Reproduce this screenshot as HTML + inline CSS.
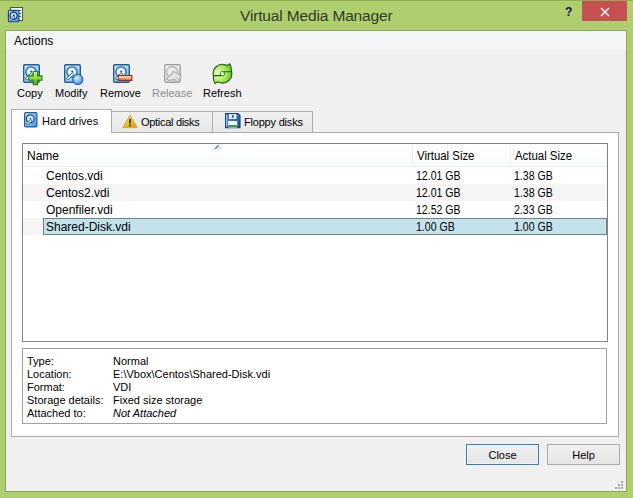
<!DOCTYPE html>
<html><head><meta charset="utf-8">
<style>
*{box-sizing:border-box;margin:0;padding:0}
html,body{width:633px;height:498px;overflow:hidden}
body{position:relative;background:#afcf6f;font-family:"Liberation Sans",sans-serif;font-size:11px;color:#000}
.a{position:absolute;white-space:nowrap}
#topline{left:0;top:0;width:633px;height:1px;background:#8fae57}
#client{left:5px;top:30px;width:622px;height:462px;border:1px solid #8aa85a;background:#f0f0f0}
#menubar{left:6px;top:31px;width:620px;height:20px;background:#f4f5f7}
#menuline{left:6px;top:51px;width:620px;height:1px;background:#e8e8e8}
.tb{top:87px;font-size:11px;line-height:13px;color:#000}
.tab{top:111px;height:22px;border:1px solid #adadad;border-bottom:none;background:linear-gradient(#f0f0f0,#e8e8e8)}
#panel{left:11px;top:132px;width:608px;height:305px;border:1px solid #adadad;background:#fff}
#list{left:22px;top:143px;width:586px;height:199px;border:1px solid #838383;background:#fff}
#details{left:22px;top:348px;width:585px;height:76px;border:1px solid #a0a0a0;background:#fff}
.num{font-size:12px;line-height:14px;transform:scaleX(0.88);transform-origin:0 0}
.btn{top:444px;width:73px;height:21px;border:1px solid #acacac;background:linear-gradient(#f0f0f0,#e5e5e5);text-align:center;line-height:21px;font-size:11px}
</style></head><body>
<div class="a" id="topline"></div>
<!-- title icon -->
<svg class="a" style="left:6px;top:5px" width="20" height="20" viewBox="0 0 20 20">
  <defs><linearGradient id="tig" x1="0" y1="0" x2="1" y2="1"><stop offset="0" stop-color="#c8ecff"/><stop offset="0.55" stop-color="#7cbcf0"/><stop offset="1" stop-color="#3d8ee0"/></linearGradient></defs>
  <rect x="4.5" y="2.5" width="12" height="13" fill="#fff" stroke="#4d5c36"/>
  <path d="M13 5.5h2M13 8.5h2M13 11.5h2" stroke="#3a4658" stroke-width="0.9"/>
  <rect x="2.4" y="5.4" width="10.6" height="11.4" rx="1" fill="url(#tig)" stroke="#1b4c86" stroke-width="1.1"/>
  <circle cx="7.6" cy="10.6" r="3.6" fill="#cfeaff" stroke="#173f86" stroke-width="1.4"/>
  <circle cx="7.8" cy="10.2" r="0.9" fill="#173f86"/>
  <path d="M7.6 11 L4.2 14.2 Q3.6 14.9 4.3 15.3 Q4.9 15.6 5.5 15 L8.9 11.8 Z" fill="#fff" stroke="#173f86" stroke-width="0.8"/>
</svg>
<div class="a" style="left:240px;top:5px;font-size:15.5px;line-height:21px;letter-spacing:-0.15px;color:#2f3a24">Virtual Media Manager</div>
<div class="a" style="left:565px;top:4px;font-size:12px;font-weight:bold;line-height:16px;color:#111">?</div>
<div class="a" style="left:582px;top:1px;width:45px;height:20px;background:#c75050"></div>
<svg class="a" style="left:600px;top:7px" width="10" height="10" viewBox="0 0 10 10"><path d="M1 1L9 9M9 1L1 9" stroke="#fff" stroke-width="1.4"/></svg>

<div class="a" id="client"></div>
<div class="a" id="menubar"></div>
<div class="a" id="menuline"></div>
<div class="a" style="left:14px;top:34px;font-size:12px;line-height:14px">Actions</div>

<!-- toolbar -->
<svg width="0" height="0" style="position:absolute">
 <defs>
  <linearGradient id="hg" x1="0" y1="0" x2="1" y2="1"><stop offset="0" stop-color="#d8f2ff"/><stop offset="0.5" stop-color="#a9dcfb"/><stop offset="1" stop-color="#6fb9ef"/></linearGradient>
  <radialGradient id="dg" cx="0.45" cy="0.4" r="0.6"><stop offset="0" stop-color="#ffffff"/><stop offset="0.6" stop-color="#d9effc"/><stop offset="1" stop-color="#9ccff3"/></radialGradient>
  <linearGradient id="gg" x1="0" y1="0" x2="0" y2="1"><stop offset="0" stop-color="#d6f59a"/><stop offset="0.5" stop-color="#8fdc3c"/><stop offset="1" stop-color="#3fa51a"/></linearGradient>
  <radialGradient id="bg2" cx="0.4" cy="0.35" r="0.7"><stop offset="0" stop-color="#e6f6ff"/><stop offset="0.5" stop-color="#7cc2f5"/><stop offset="1" stop-color="#2f86e0"/></radialGradient>
  <linearGradient id="rg" x1="0" y1="0" x2="0" y2="1"><stop offset="0" stop-color="#fff2e0"/><stop offset="0.45" stop-color="#f7b98a"/><stop offset="1" stop-color="#d9541e"/></linearGradient>
  <linearGradient id="grg" x1="0" y1="0" x2="1" y2="1"><stop offset="0" stop-color="#f4f4f4"/><stop offset="1" stop-color="#cfcfcf"/></linearGradient>
  <radialGradient id="rfg" cx="0.3" cy="0.5" r="0.8"><stop offset="0" stop-color="#f4ffc8"/><stop offset="0.5" stop-color="#a6e85e"/><stop offset="1" stop-color="#4cb520"/></radialGradient>
  <radialGradient id="rfg2" cx="0.5" cy="0.4" r="0.8"><stop offset="0" stop-color="#e8ffc0"/><stop offset="0.5" stop-color="#92df4a"/><stop offset="1" stop-color="#3fa818"/></radialGradient>
  <symbol id="hdd" viewBox="0 0 17 19">
   <rect x="0.7" y="0.7" width="15.6" height="17.6" rx="1.2" fill="url(#hg)" stroke="#1f5aa6" stroke-width="1.4"/>
   <circle cx="8" cy="8" r="5.2" fill="url(#dg)" stroke="#2360a8" stroke-width="1.3"/>
   <circle cx="8.2" cy="7.6" r="1" fill="#1a4c90"/>
   <path d="M8.4 8.8 L2.8 13.8 Q2 14.8 2.9 15.6 Q3.8 16.2 4.6 15.4 L10 10.4 Z" fill="#f4fbff" stroke="#2360a8" stroke-width="1"/>
  </symbol>
  <symbol id="hddg" viewBox="0 0 17 19">
   <rect x="0.7" y="0.7" width="15.6" height="17.6" rx="1.5" fill="url(#grg)" stroke="#9a9a9a" stroke-width="1.2"/>
   <circle cx="8" cy="8" r="5.4" fill="#ececec" stroke="#a8a8a8" stroke-width="1.1"/>
   <path d="M8.6 9 L3 14.5 L2.4 15.4 L3.6 15.8 L9.8 10.2 Z" fill="#f6f6f6" stroke="#a0a0a0" stroke-width="0.9"/>
  </symbol>
 </defs>
</svg>
<svg class="a" style="left:23px;top:64px" width="20" height="22" viewBox="0 0 20 22">
 <use href="#hdd" x="0" y="0" width="17" height="19"/>
 <path d="M10.2 7.5h4.4v4.4h4.4v4.4h-4.4v4.4h-4.4v-4.4h-4.4v-4.4h4.4z" fill="url(#gg)" stroke="#2c7a12" stroke-width="1.1"/>
</svg>
<svg class="a" style="left:64px;top:64px" width="20" height="22" viewBox="0 0 20 22">
 <use href="#hdd" x="0" y="0" width="17" height="19"/>
 <circle cx="13.8" cy="15.5" r="5" fill="url(#bg2)" stroke="#1f5fb0" stroke-width="1.1"/>
</svg>
<svg class="a" style="left:113px;top:64px" width="20" height="22" viewBox="0 0 20 22">
 <use href="#hdd" x="0" y="0" width="17" height="19"/>
 <rect x="5.3" y="11.5" width="13.6" height="5" fill="url(#rg)" stroke="#9a2f12" stroke-width="1.1"/>
</svg>
<svg class="a" style="left:164px;top:64px" width="22" height="22" viewBox="0 0 22 22">
 <use href="#hddg" x="0" y="0" width="17" height="19"/>
 <path d="M2.8 14.2 L8.6 9.6 L9.2 7 L17.8 12.4 L11.2 19.2 L10.9 15.4 L4.6 16.6 Z" fill="url(#grg)" stroke="#a6a6a6" stroke-width="1" stroke-linejoin="round"/>
</svg>
<svg class="a" style="left:210px;top:61px" width="24" height="25" viewBox="0 0 24 25">
 <path d="M3.3 14.6 A9.3 9.3 0 0 1 15.2 3.8 L16.8 4.6 L19.8 2.8 Q21.8 6.5 21.6 10.8 A9.3 9.3 0 0 1 9.6 21.6 L8 20.8 L5 22.6 Q3 18.9 3.3 14.6 Z" fill="url(#rfg)" stroke="#1f5a0e" stroke-width="1.1" stroke-linejoin="round"/>
 <path d="M11.2 14.6 A2.6 2.6 0 0 1 10.2 11.8 Q11 9.8 13.6 10.8 M13.6 10.8 A2.6 2.6 0 0 1 14.6 13.6 Q13.8 15.6 11.2 14.6" fill="#e4f7c8" stroke="#2a6a14" stroke-width="0.9"/>
 <path d="M3.6 14.6 H11.2 M13.6 10.8 H21.4" stroke="#1f5a0e" stroke-width="1.1"/>
</svg>
<div class="a tb" style="left:17px">Copy</div>
<div class="a tb" style="left:55px">Modify</div>
<div class="a tb" style="left:100px">Remove</div>
<div class="a tb" style="left:152px;color:#8d8d8d">Release</div>
<div class="a tb" style="left:203px">Refresh</div>

<!-- tabs -->
<div class="a tab" style="left:111px;width:102px"></div>
<div class="a tab" style="left:212px;width:101px"></div>
<div class="a" id="panel"></div>
<div class="a" style="left:11px;top:109px;width:101px;height:24px;border:1px solid #adadad;border-bottom:none;background:#fff"></div>
<div class="a" style="left:42px;top:114px;font-size:11px;line-height:14px">Hard drives</div>
<div class="a" style="left:141px;top:115px;font-size:11px;line-height:14px;letter-spacing:-0.3px">Optical disks</div>
<div class="a" style="left:244px;top:115px;font-size:11px;line-height:14px;letter-spacing:-0.2px">Floppy disks</div>

<div class="a" id="list"></div>
<svg class="a" style="left:24px;top:112px" width="14" height="16" viewBox="0 0 14 16">
 <defs><linearGradient id="thg" x1="0" y1="0" x2="1" y2="1"><stop offset="0" stop-color="#c6f0ff"/><stop offset="0.5" stop-color="#7cc4f4"/><stop offset="1" stop-color="#3a8ee6"/></linearGradient></defs>
 <rect x="0.6" y="0.6" width="12.3" height="14.3" rx="1.2" fill="url(#thg)" stroke="#1d5aa6" stroke-width="1.2"/>
 <circle cx="6.2" cy="6.8" r="3.9" fill="#d6eefc" stroke="#1a4c96" stroke-width="1.3"/>
 <circle cx="6.3" cy="6.5" r="0.8" fill="#1f56a0"/>
 <path d="M6.6 7.4 L2.6 11 Q2 11.8 2.7 12.4 Q3.4 12.9 4.1 12.3 L8.1 8.7 Z" fill="#fff" stroke="#1f56a0" stroke-width="0.9"/>
</svg>
<svg class="a" style="left:122px;top:114px" width="16" height="15" viewBox="0 0 16 15">
 <defs><linearGradient id="wg" x1="0" y1="0" x2="0.6" y2="1"><stop offset="0" stop-color="#fff7a0"/><stop offset="0.5" stop-color="#f4d11c"/><stop offset="1" stop-color="#e0a800"/></linearGradient></defs>
 <path d="M8 1 L15.2 13.6 L0.8 13.6 Z" fill="url(#wg)" stroke="#b89a3a" stroke-width="0.7" stroke-linejoin="round"/>
 <path d="M8 4.8 L8 9.6" stroke="#1a1a10" stroke-width="1.6"/>
 <rect x="7.1" y="10.6" width="1.8" height="1.6" fill="#1a1a10"/>
</svg>
<svg class="a" style="left:225px;top:113px" width="16" height="16" viewBox="0 0 16 16">
 <defs><linearGradient id="fg" x1="0" y1="0" x2="1" y2="1"><stop offset="0" stop-color="#4a8ee0"/><stop offset="1" stop-color="#1c4f9c"/></linearGradient></defs>
 <path d="M0.6 0.6 H13 L15 2.6 V14.6 H0.6 Z" fill="url(#fg)" stroke="#163f80" stroke-width="1.1"/>
 <path d="M1.7 1.7 V13.6" stroke="#9fe0ff" stroke-width="1"/>
 <rect x="4" y="1.2" width="7.4" height="4.6" fill="#fff"/>
 <rect x="6.8" y="2" width="2" height="2.8" fill="#2a64b0"/>
 <rect x="3.2" y="8" width="9" height="6.6" fill="#f4fff0"/>
 <rect x="3.2" y="12" width="9" height="2.2" fill="#3a9a4a"/>
</svg>

<div class="a" style="left:23px;top:144px;width:584px;height:23px;background:linear-gradient(#fff,#fafbfc);border-bottom:1px solid #eef0f3"></div>
<div class="a" style="left:412px;top:144px;width:1px;height:22px;background:#eceef2"></div>
<div class="a" style="left:510px;top:144px;width:1px;height:22px;background:#eceef2"></div>
<svg class="a" style="left:214px;top:144px" width="9" height="6" viewBox="0 0 9 6"><path d="M1.5 5 L4.5 1.5 L7.5 5 Z" fill="#dce9f0"/><path d="M1 5 L4.5 1.2" stroke="#3d5f72" stroke-width="1.1" fill="none"/><path d="M4.5 1.2 L8 5" stroke="#a9c6d4" stroke-width="0.8" fill="none"/></svg>
<div class="a" style="left:27px;top:149px;font-size:12px;line-height:14px">Name</div>
<div class="a" style="left:417px;top:149px;font-size:12px;line-height:14px;transform:scaleX(0.95);transform-origin:0 0">Virtual Size</div>
<div class="a" style="left:515px;top:149px;font-size:12px;line-height:14px;transform:scaleX(0.95);transform-origin:0 0">Actual Size</div>

<div class="a" style="left:23px;top:184px;width:584px;height:17px;background:#f5f5f5"></div>
<div class="a" style="left:23px;top:218px;width:584px;height:17px;background:#f5f5f5"></div>
<div class="a" style="left:43px;top:218px;width:564px;height:17px;background:#c3e2ec;border:1px solid #70877c"></div>

<div class="a" style="left:46px;top:169px;font-size:12px;line-height:14px">Centos.vdi</div>
<div class="a num" style="left:416px;top:169px">12.01 GB</div>
<div class="a num" style="left:514px;top:169px">1.38 GB</div>
<div class="a" style="left:46px;top:186px;font-size:12px;line-height:14px">Centos2.vdi</div>
<div class="a num" style="left:416px;top:186px">12.01 GB</div>
<div class="a num" style="left:514px;top:186px">1.38 GB</div>
<div class="a" style="left:46px;top:203px;font-size:12px;line-height:14px">Openfiler.vdi</div>
<div class="a num" style="left:416px;top:203px">12.52 GB</div>
<div class="a num" style="left:514px;top:203px">2.33 GB</div>
<div class="a" style="left:46px;top:220px;font-size:12px;line-height:14px">Shared-Disk.vdi</div>
<div class="a num" style="left:416px;top:220px">1.00 GB</div>
<div class="a num" style="left:514px;top:220px">1.00 GB</div>

<div class="a" id="details"></div>
<div class="a" style="left:27px;top:355px;line-height:13px">Type:<br>Location:<br>Format:<br>Storage details:<br>Attached to:</div>
<div class="a" style="left:113px;top:355px;line-height:13px">Normal<br>E:\Vbox\Centos\Shared-Disk.vdi<br>VDI<br>Fixed size storage<br><i>Not Attached</i></div>

<div class="a btn" style="left:466px;border-color:#3c7fb1;box-shadow:inset 0 0 0 1px #e5f4fc">Close</div>
<div class="a btn" style="left:547px">Help</div>
<svg class="a" style="left:614px;top:480px" width="10" height="10" viewBox="0 0 10 10" shape-rendering="crispEdges">
 <g fill="#a8a8a8"><rect x="7" y="1" width="2" height="2"/><rect x="4" y="4" width="2" height="2"/><rect x="7" y="4" width="2" height="2"/><rect x="1" y="7" width="2" height="2"/><rect x="4" y="7" width="2" height="2"/><rect x="7" y="7" width="2" height="2"/></g>
</svg>
</body></html>
